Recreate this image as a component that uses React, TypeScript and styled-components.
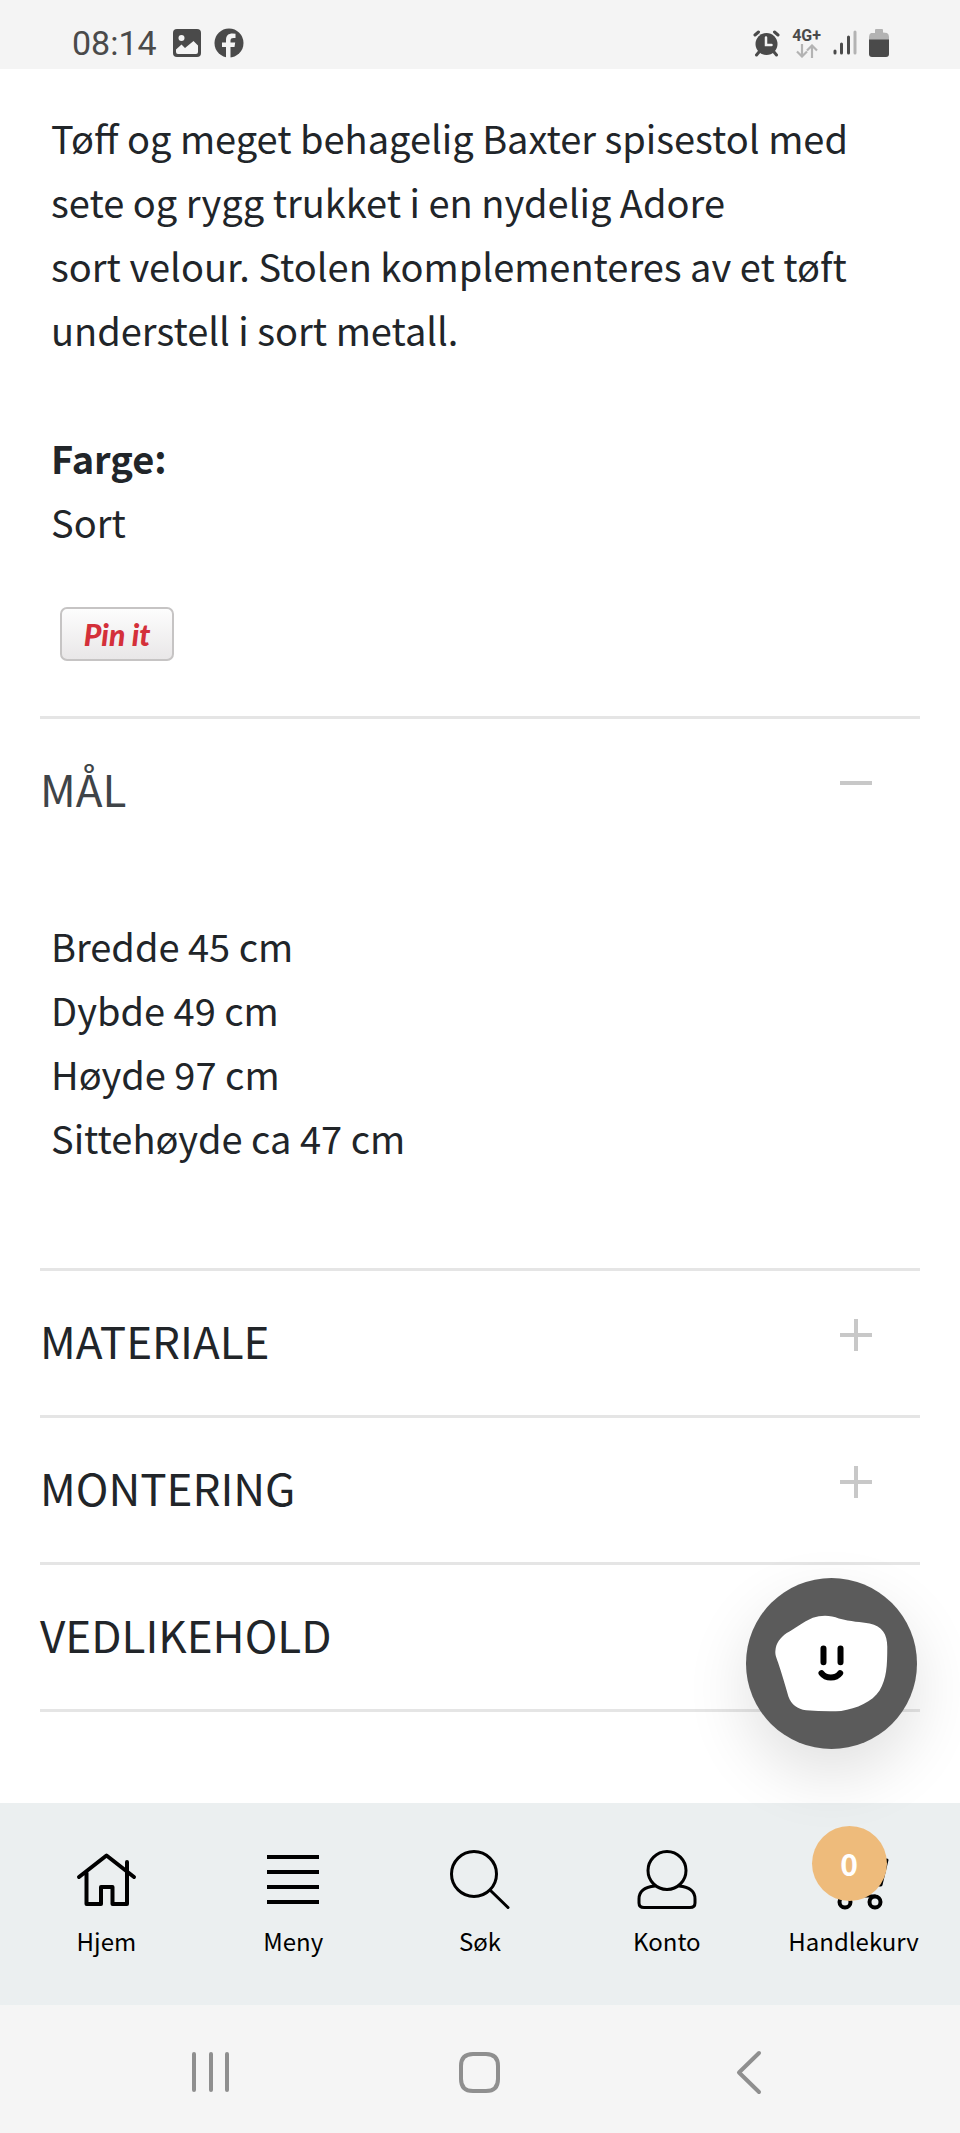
import React, { useState } from "react";
import styled, { createGlobalStyle } from "styled-components";

const GlobalStyle = createGlobalStyle`
  * { box-sizing: border-box; }
  body {
    margin: 0;
    background: #ffffff;
    color: #212529;
    font-family: "Noto Sans CJK JP", "Noto Sans", sans-serif;
  }
  button { font: inherit; color: inherit; background: none; border: 0; padding: 0; cursor: pointer; }
  p, h2 { margin: 0; font-weight: 400; }
  svg { display: block; flex: none; }
`;

const Page = styled.div`
  min-height: 100vh;
  display: flex;
  flex-direction: column;
`;

const StatusBar = styled.header`
  display: flex;
  justify-content: space-between;
  height: 69px;
  padding: 17px 71px 0 72px;
  background: #f4f4f4;
  color: #4a4a4a;
`;

const StatusGroup = styled.div<{ $gap: number }>`
  display: flex;
  align-items: center;
  gap: ${(p) => p.$gap}px;
`;

const Clock = styled.time`
  margin-right: 3px;
  font-family: Roboto, sans-serif;
  font-size: 34px;
  line-height: 52px;
`;

const Network = styled.div`
  display: flex;
  flex-direction: column;
  align-items: center;
  font-family: Roboto, sans-serif;
  font-size: 16px;
  font-weight: 700;
  line-height: 16px;
`;

const Main = styled.main`
  flex: 1;
  padding: 37px 40px 91px;
`;

const Description = styled.section`
  padding: 0 11px 55px;
  font-size: 38px;
  line-height: 64px;
`;

const Facts = styled.p`
  padding-top: 64px;
  strong { font-weight: 600; }
`;

const PinButton = styled.button`
  && {
    display: block;
    width: 114px;
    height: 54px;
    margin: 53px 0 0 9px;
    border: 2px solid #c6c4c4;
    border-radius: 7px;
    background: linear-gradient(#fdfdfd, #e9e7e8);
    color: #d4303a;
    font-family: Lato, sans-serif;
    font-size: 30px;
    font-style: italic;
    font-weight: 900;
    line-height: 50px;
  }
`;

const Panel = styled.section`
  border-top: 3px solid #e5e5e5;
  &:last-child { border-bottom: 3px solid #e5e5e5; }
`;

const PanelHeader = styled.button<{ $open: boolean }>`
  && {
    display: flex;
    align-items: flex-start;
    justify-content: space-between;
    width: 100%;
    padding: 32px 48px 38px 0;
    color: ${(p) => (p.$open ? "#3f4448" : "#212529")};
    font-size: 44px;
    line-height: 74px;
    text-align: left;
  }
`;

const PanelBody = styled.div`
  padding: 51px 11px 98px;
  font-size: 38px;
  line-height: 64px;
`;

const BottomArea = styled.div`
  position: relative;
`;

const TabBar = styled.nav`
  display: flex;
  padding: 46px 13px 43px;
  background: #ebeff0;
`;

const Tab = styled.a`
  flex: 1 1 0;
  display: flex;
  flex-direction: column;
  align-items: center;
  gap: 11px;
  color: #000000;
  text-decoration: none;
  font-size: 24px;
  line-height: 42px;
`;

const TabIcon = styled.span`
  position: relative;
`;

const Badge = styled.span`
  position: absolute;
  left: -12px;
  top: -23px;
  width: 75px;
  height: 75px;
  border-radius: 50%;
  background: #eebb7b;
  color: #ffffff;
  font-size: 30px;
  font-weight: 700;
  line-height: 74px;
  text-align: center;
`;

const ChatButton = styled.button`
  && {
    position: absolute;
    right: 43px;
    bottom: calc(100% + 54px);
    width: 171px;
    height: 171px;
    border-radius: 50%;
    background: #5b5b5b;
    box-shadow: 0 26px 64px rgba(0, 0, 0, 0.12);
  }
`;

const SystemBar = styled.nav`
  display: flex;
  padding: 41px 76px 35px;
  background: #f5f5f5;
  color: #8f8f8f;
`;

const SystemButton = styled.button`
  && {
    flex: 1 1 0;
    display: flex;
    justify-content: center;
    color: #8f8f8f;
  }
`;

const Stroke = (p: { d: string; width?: number; size?: number; children?: React.ReactNode }) => (
  <svg
    width={p.size ?? 60}
    height={p.size ?? 60}
    viewBox={`0 0 ${p.size ?? 60} ${p.size ?? 60}`}
    fill="none"
    stroke="currentColor"
    strokeWidth={p.width ?? 4}
    strokeLinecap="round"
    strokeLinejoin="round"
    overflow="visible"
    aria-hidden="true"
  >
    <path d={p.d} />
    {p.children}
  </svg>
);

const PhotoIcon = () => (
  <svg width="28" height="28" viewBox="0 0 28 28" aria-hidden="true">
    <rect width="28" height="28" rx="4" fill="#4a4a4a" />
    <circle cx="8.5" cy="9" r="3" fill="#f4f4f4" />
    <path d="M3 20.5 8.5 15.5 12 19 20.5 12 25 16.5V23Q25 25 23 25H5Q3 25 3 23Z" fill="#f4f4f4" />
  </svg>
);

const FacebookIcon = () => (
  <svg width="30" height="30" viewBox="0 0 30 30" aria-hidden="true">
    <circle cx="15" cy="15" r="14.5" fill="#4a4a4a" />
    <path
      d="M12 30V19H8V14.5H12V12C12 7.500 14.500 5.500 18.500 5.500L21.500 5.800V10H19.500C17.500 10 16.500 10.800 16.500 12.500V14.500H21.200L20.500 19H16.500V30Z"
      fill="#f4f4f4"
    />
  </svg>
);

const AlarmIcon = () => (
  <svg width="27" height="28" viewBox="0 0 27 28" fill="none" stroke="#4a4a4a" strokeLinecap="round" aria-hidden="true">
    <circle cx="13.500" cy="15" r="11" fill="#4a4a4a" stroke="none" />
    <path d="M2 6 5.500 3M25 6 21.500 3M6 23 3.500 26M21 23 23.500 26" strokeWidth="3" />
    <path d="M13 8.500V16H18.500" stroke="#f4f4f4" strokeWidth="2.500" />
  </svg>
);

const DataArrows = () => (
  <svg width="22" height="14" viewBox="0 0 22 14" fill="none" stroke="#b3b3b3" strokeWidth="2.200" aria-hidden="true">
    <path d="M6 0V12M1 7.500 6 12.500 11 7.500M16 14V2M11 6.500 16 1.500 21 6.500" />
  </svg>
);

const SignalIcon = () => (
  <svg width="24" height="28" viewBox="0 0 24 28" strokeWidth="3" strokeLinecap="round" stroke="#4a4a4a" aria-hidden="true">
    <path d="M2 22V24M8.500 15V24M15.500 8V24" />
    <path d="M22 3V24" stroke="#b3b3b3" />
  </svg>
);

const BatteryIcon = () => (
  <svg width="20" height="28" viewBox="0 0 20 28" aria-hidden="true">
    <path d="M6 4V1Q6 0 7 0H13Q14 0 14 1V3.500L18 4Q20 5 20 8V11H0V8Q0 5 2 4Z" fill="#b3b3b3" />
    <path d="M0 10.500H20V25Q20 28 17 28H3Q0 28 0 25Z" fill="#4a4a4a" />
  </svg>
);

const ToggleIcon = ({ open }: { open: boolean }) => (
  <svg width="32" height="64" viewBox="0 0 32 64" stroke="#c8c8c8" strokeWidth="4" aria-hidden="true">
    <path d={open ? "M0 32H32" : "M0 32H32M16 16V48"} />
  </svg>
);

const ChatFace = () => (
  <svg width="171" height="171" viewBox="80 85 512 512" aria-hidden="true">
    <path
      d="M168 303C170 280 182 264 202 250C228 236 250 217 280 204C306 195 334 196 358 206C394 216 424 216 450 221C488 228 503 254 503 290C503 350 501 385 480 422C458 456 412 476 365 483C330 486 295 483 260 481C234 478 216 465 207 440C197 405 187 370 176 338C170 322 167 314 168 303Z"
      fill="#ffffff"
    />
    <path d="M312 296V337M363 296V337" stroke="#000" strokeWidth="18" strokeLinecap="round" />
    <path d="M306 370Q316 383 334 383Q352 383 362 370" stroke="#000" strokeWidth="18" strokeLinecap="round" fill="none" />
  </svg>
);

const description =
  "Tøff og meget behagelig Baxter spisestol med sete og rygg trukket i en nydelig Adore " +
  "sort\u00a0velour. Stolen komplementeres av et tøft understell i sort metall.";

const panels = [
  { title: "MÅL", lines: ["Bredde 45 cm", "Dybde 49 cm", "Høyde 97 cm", "Sittehøyde ca 47 cm"] },
  { title: "MATERIALE", lines: [] },
  { title: "MONTERING", lines: [] },
  { title: "VEDLIKEHOLD", lines: [] },
];

export default function App() {
  const [openPanel, setOpenPanel] = useState<string | null>("MÅL");

  return (
    <Page>
      <GlobalStyle />
      <StatusBar>
        <StatusGroup $gap={13}>
          <Clock>08:14</Clock>
          <PhotoIcon />
          <FacebookIcon />
        </StatusGroup>
        <StatusGroup $gap={12}>
          <AlarmIcon />
          <Network>
            4G+
            <DataArrows />
          </Network>
          <SignalIcon />
          <BatteryIcon />
        </StatusGroup>
      </StatusBar>

      <Main>
        <Description>
          <p>{description}</p>
          <Facts>
            <strong>Farge:</strong>
            <br />
            Sort
          </Facts>
          <PinButton type="button">Pin it</PinButton>
        </Description>

        <div>
          {panels.map(({ title, lines }) => {
            const open = openPanel === title;
            return (
              <Panel key={title}>
                <h2>
                  <PanelHeader
                    type="button"
                    $open={open}
                    aria-expanded={open}
                    onClick={() => setOpenPanel(open ? null : title)}
                  >
                    {title}
                    <ToggleIcon open={open} />
                  </PanelHeader>
                </h2>
                {open && lines.length > 0 && (
                  <PanelBody>
                    {lines.map((line) => (
                      <p key={line}>{line}</p>
                    ))}
                  </PanelBody>
                )}
              </Panel>
            );
          })}
        </div>
      </Main>

      <BottomArea>
        <TabBar>
          <Tab href="#hjem">
            <TabIcon>
              <Stroke d="M3 28 30.500 6.500 58 28M10.500 24V55H25V38H36.500V55H51V13" />
            </TabIcon>
            Hjem
          </Tab>
          <Tab href="#meny">
            <TabIcon>
              <svg width="60" height="60" viewBox="0 0 60 60" stroke="currentColor" strokeWidth="4" aria-hidden="true">
                <path d="M4 8H56M4 23H56M4 38H56M4 53H56" />
              </svg>
            </TabIcon>
            Meny
          </Tab>
          <Tab href="#sok">
            <TabIcon>
              <Stroke d="M41 42 58 58.500" width={3}>
                <circle cx="24" cy="25" r="22.500" />
              </Stroke>
            </TabIcon>
            Søk
          </Tab>
          <Tab href="#konto">
            <TabIcon>
              <Stroke
                d="M18 37C7 38 2 43 2 50V54Q2 58.500 7 58.500H53Q58 58.500 58 54V50C58 43 53 38 42 37"
                width={3}
              >
                <circle cx="30" cy="21.500" r="19" />
              </Stroke>
            </TabIcon>
            Konto
          </Tab>
          <Tab href="#handlekurv">
            <TabIcon>
              <Stroke d="M2 6H10L18 47H51M12 11H63L57 36H17" width={3}>
                <circle cx="21" cy="53" r="5.500" strokeWidth="4" />
                <circle cx="51" cy="53" r="5.500" strokeWidth="4" />
              </Stroke>
              <Badge>0</Badge>
            </TabIcon>
            Handlekurv
          </Tab>
        </TabBar>
        <ChatButton type="button" aria-label="Chat">
          <ChatFace />
        </ChatButton>
      </BottomArea>

      <SystemBar>
        <SystemButton type="button" aria-label="Siste apper">
          <Stroke size={52} width={4} d="M9 8V44M26 8V44M42 8V44" />
        </SystemButton>
        <SystemButton type="button" aria-label="Hjem-skjerm">
          <Stroke size={52} width={4} d="M19 8H32Q44 8 44 20V33Q44 45 32 45H19Q7 45 7 33V20Q7 8 19 8Z" />
        </SystemButton>
        <SystemButton type="button" aria-label="Tilbake">
          <Stroke size={52} width={4} d="M36 7 16 26.500 36 46" />
        </SystemButton>
      </SystemBar>
    </Page>
  );
}
